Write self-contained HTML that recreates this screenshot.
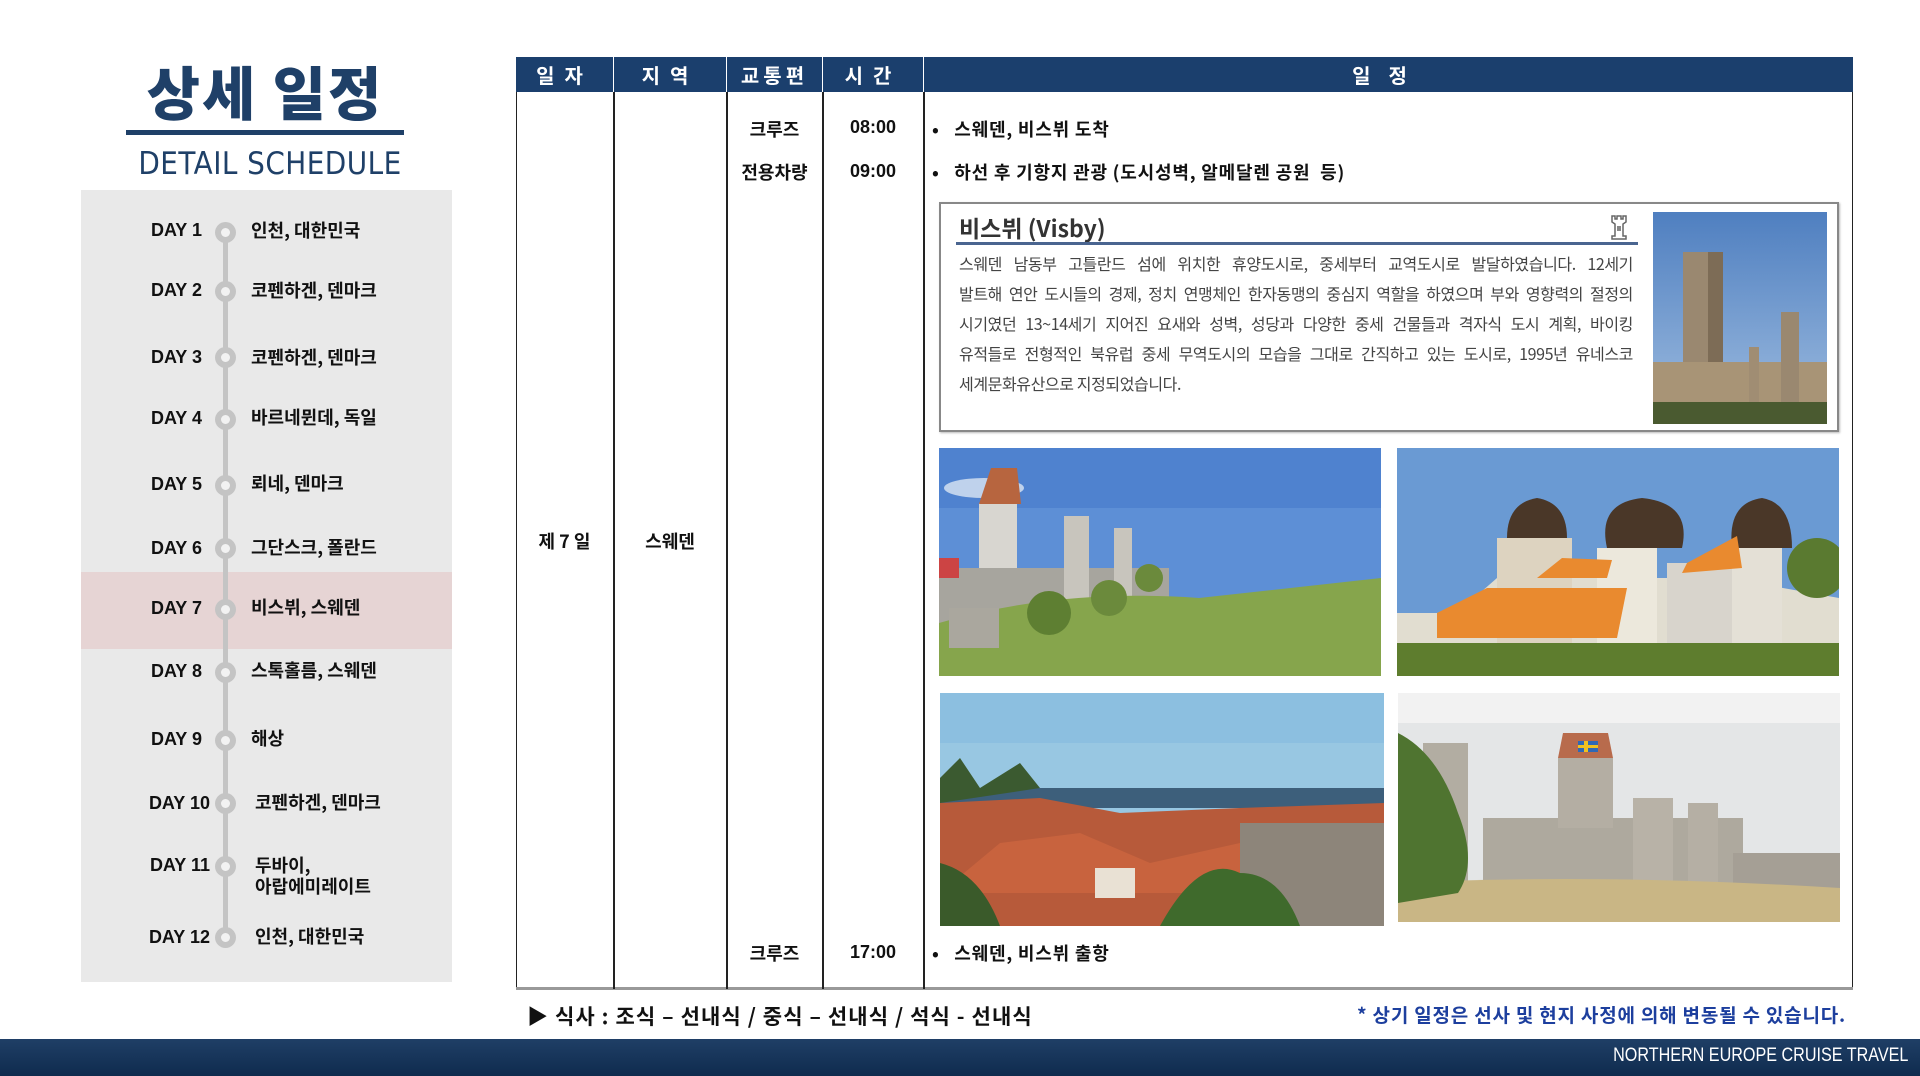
<!DOCTYPE html>
<html><head><meta charset="utf-8"><style>
*{margin:0;padding:0;box-sizing:border-box}
body{width:1920px;height:1076px;background:#fff;position:relative;overflow:hidden;font-family:"Liberation Sans","Noto Sans CJK KR",sans-serif}
.a{position:absolute}
.kr{font-family:"Noto Sans CJK KR",sans-serif}
.title{left:126px;width:278px;top:50px;text-align:center;font-size:58px;font-weight:900;color:#1f4068;letter-spacing:2px;line-height:80px}
.panel{left:81px;top:190px;width:371px;height:792px;background:#e9e9e9}
.hl{left:81px;top:572px;width:371px;height:77px;background:#e6d4d4}
.vline{left:223px;top:231px;width:5px;height:708px;background:#c4c4c4}
.day{font-weight:700;font-size:18px;color:#111;width:120px;text-align:right;left:82px}
.dot{left:215px;width:21px;height:21px;border-radius:50%;background:#c4c4c4}
.dot::after{content:"";position:absolute;left:6px;top:6px;width:9px;height:9px;border-radius:50%;background:#f2f2f2}
.place{left:251px;font-weight:700;font-size:18px;color:#111;line-height:21px}
.hd{top:57px;height:35px;background:#1b3f6d;color:#fff;font-weight:700;font-size:20px;text-align:center;line-height:35px;letter-spacing:10px}
.vl{top:92px;width:1.5px;height:897px;background:#222}
.c{font-weight:700;font-size:18px;color:#111;text-align:center}
.sch{font-weight:700;font-size:18px;color:#111;left:932px;letter-spacing:0.8px}
.ph{position:absolute}
.body p{white-space:nowrap;height:30px}
.body p.j{text-align:justify;text-align-last:justify;white-space:normal;overflow:hidden}
</style></head><body>
<div class="a title kr">상세 일정</div>
<div class="a" style="left:126px;top:130px;width:278px;height:5px;background:#1f4068"></div>
<div class="a" style="left:120px;top:146px;width:300px;text-align:center;font-size:31px;color:#1f4068;letter-spacing:0.5px;font-family:'DejaVu Sans',sans-serif;transform:scaleX(0.9)">DETAIL SCHEDULE</div>
<div class="a panel"></div>
<div class="a hl"></div>
<div class="a vline"></div>

<div class="a day" style="top:220px">DAY 1</div><div class="a dot" style="top:222px"></div><div class="a place kr" style="top:220px">인천, 대한민국</div>
<div class="a day" style="top:280px">DAY 2</div><div class="a dot" style="top:281px"></div><div class="a place kr" style="top:280px">코펜하겐, 덴마크</div>
<div class="a day" style="top:347px">DAY 3</div><div class="a dot" style="top:347px"></div><div class="a place kr" style="top:347px">코펜하겐, 덴마크</div>
<div class="a day" style="top:408px">DAY 4</div><div class="a dot" style="top:409px"></div><div class="a place kr" style="top:407px">바르네뮌데, 독일</div>
<div class="a day" style="top:474px">DAY 5</div><div class="a dot" style="top:475px"></div><div class="a place kr" style="top:473px">뢰네, 덴마크</div>
<div class="a day" style="top:538px">DAY 6</div><div class="a dot" style="top:538px"></div><div class="a place kr" style="top:537px">그단스크, 폴란드</div>
<div class="a day" style="top:598px">DAY 7</div><div class="a dot" style="top:599px"></div><div class="a place kr" style="top:597px">비스뷔, 스웨덴</div>
<div class="a day" style="top:661px">DAY 8</div><div class="a dot" style="top:662px"></div><div class="a place kr" style="top:660px">스톡홀름, 스웨덴</div>
<div class="a day" style="top:729px">DAY 9</div><div class="a dot" style="top:730px"></div><div class="a place kr" style="top:728px">해상</div>
<div class="a day" style="top:793px;left:90px">DAY 10</div><div class="a dot" style="top:793px"></div><div class="a place kr" style="top:792px;left:255px">코펜하겐, 덴마크</div>
<div class="a day" style="top:855px;left:90px">DAY 11</div><div class="a dot" style="top:856px"></div><div class="a place kr" style="top:855px;left:255px">두바이,<br>아랍에미레이트</div>
<div class="a day" style="top:927px;left:90px">DAY 12</div><div class="a dot" style="top:927px"></div><div class="a place kr" style="top:926px;left:255px">인천, 대한민국</div>

<!-- table -->
<div class="a" style="left:516px;top:57px;width:1337px;height:932px;border:1.5px solid #222;border-top:none"></div>
<div class="a" style="left:516px;top:987px;width:1337px;height:3px;background:#999"></div>
<div class="a hd kr" style="left:516px;width:97px">일자</div>
<div class="a hd kr" style="left:614px;width:112px">지역</div>
<div class="a hd kr" style="left:727px;width:95px;letter-spacing:4px">교통편</div>
<div class="a hd kr" style="left:823px;width:100px">시간</div>
<div class="a hd kr" style="left:924px;width:929px;letter-spacing:18px">일정</div>
<div class="a vl" style="left:613px"></div>
<div class="a vl" style="left:726px"></div>
<div class="a vl" style="left:822px"></div>
<div class="a vl" style="left:923px"></div>

<div class="a c kr" style="left:516px;width:97px;top:528px">제 7 일</div>
<div class="a c kr" style="left:614px;width:112px;top:528px">스웨덴</div>
<div class="a c kr" style="left:727px;width:95px;top:116px">크루즈</div>
<div class="a c" style="left:823px;width:100px;top:117px">08:00</div>
<div class="a c kr" style="left:727px;width:95px;top:159px">전용차량</div>
<div class="a c" style="left:823px;width:100px;top:161px">09:00</div>
<div class="a c kr" style="left:727px;width:95px;top:940px">크루즈</div>
<div class="a c" style="left:823px;width:100px;top:942px">17:00</div>
<div class="a sch kr" style="top:116px">•&nbsp;&nbsp; 스웨덴, 비스뷔 도착</div>
<div class="a sch kr" style="top:159px">•&nbsp;&nbsp; 하선 후 기항지 관광 (도시성벽, 알메달렌 공원&nbsp; 등)</div>
<div class="a sch kr" style="top:940px">•&nbsp;&nbsp; 스웨덴, 비스뷔 출항</div>

<!-- info box -->
<div class="a" style="left:939px;top:202px;width:900px;height:230px;border:2px solid #888;box-shadow:1px 1px 2px #bbb"></div>
<div class="a kr" style="left:959px;top:210px;font-size:23px;font-weight:700;color:#333">비스뷔 (Visby)</div>
<div class="a" style="left:956px;top:242px;width:682px;height:3px;background:#4a6590"></div>
<svg class="a" style="left:1608px;top:214px" width="22" height="26" viewBox="0 0 22 26"><path d="M4 2h3v3h2V2h4v3h2V2h3v6l-3 2v12h3v3H4v-3h3V10L4 8z" fill="none" stroke="#666" stroke-width="1.5"/><rect x="9" y="12" width="4" height="5" fill="#888"/></svg>
<div class="a kr body" style="left:959px;top:248px;width:674px;font-size:16px;line-height:30px;color:#444;letter-spacing:-0.4px">
<p class="j">스웨덴 남동부 고틀란드 섬에 위치한 휴양도시로, 중세부터 교역도시로 발달하였습니다. 12세기</p>
<p class="j">발트해 연안 도시들의 경제, 정치 연맹체인 한자동맹의 중심지 역할을 하였으며 부와 영향력의 절정의</p>
<p class="j">시기였던 13~14세기 지어진 요새와 성벽, 성당과 다양한 중세 건물들과 격자식 도시 계획, 바이킹</p>
<p class="j">유적들로 전형적인 북유럽 중세 무역도시의 모습을 그대로 간직하고 있는 도시로, 1995년 유네스코</p>
<p>세계문화유산으로 지정되었습니다.</p>
</div>
<svg class="a" style="left:1653px;top:212px" width="174" height="212" viewBox="0 0 174 212" preserveAspectRatio="none">
<defs><linearGradient id="s0" x1="0" y1="0" x2="0" y2="1"><stop offset="0" stop-color="#4f7fc0"/><stop offset="1" stop-color="#9fbde0"/></linearGradient></defs>
<rect width="174" height="212" fill="url(#s0)"/>
<rect x="30" y="40" width="40" height="172" fill="#9a8870"/><rect x="55" y="40" width="15" height="172" fill="#7d6c56"/>
<rect x="0" y="150" width="174" height="62" fill="#a89476"/>
<rect x="128" y="100" width="18" height="112" fill="#9a8870"/><rect x="96" y="135" width="10" height="77" fill="#a08d73"/>
<rect x="0" y="190" width="174" height="22" fill="#4a5a30"/>
</svg>

<!-- photos -->
<svg class="ph" style="left:939px;top:448px" width="442" height="228" viewBox="0 0 442 228" preserveAspectRatio="none">
<rect width="442" height="228" fill="#5d8fd6"/><rect y="0" width="442" height="60" fill="#4f82cf"/>
<ellipse cx="45" cy="40" rx="40" ry="10" fill="#dbe6f3" opacity=".8"/>
<rect x="40" y="55" width="38" height="115" fill="#d8d6d0"/><path d="M40 56 L52 20 L78 20 L82 56Z" fill="#b7653f"/>
<rect x="0" y="120" width="230" height="60" fill="#a7a59e"/><rect x="125" y="68" width="25" height="100" fill="#c8c5bd"/><rect x="175" y="80" width="18" height="80" fill="#c8c5bd"/>
<rect x="0" y="110" width="20" height="20" fill="#c44"/>
<path d="M0 175 Q120 140 260 150 L442 130 L442 228 L0 228Z" fill="#86a54c"/>
<rect x="10" y="160" width="50" height="40" fill="#aaa79e"/>
<circle cx="110" cy="165" r="22" fill="#5e7f32"/><circle cx="170" cy="150" r="18" fill="#6b8a3c"/><circle cx="210" cy="130" r="14" fill="#6b8a3c"/>
</svg>
<svg class="ph" style="left:1397px;top:448px" width="442" height="228" viewBox="0 0 442 228" preserveAspectRatio="none">
<rect width="442" height="228" fill="#6a9ad3"/>
<path d="M100 130 L60 165 L0 165 L0 228 L442 228 L442 150 L330 130Z" fill="#e1ddd0"/>
<rect x="100" y="90" width="75" height="130" fill="#ddd3c0"/><rect x="200" y="100" width="60" height="120" fill="#ece8dc"/><rect x="270" y="115" width="90" height="105" fill="#d8d4cc"/><rect x="335" y="100" width="50" height="110" fill="#e4e0d6"/>
<path d="M210 100 Q200 55 245 50 Q295 55 285 100Z" fill="#4a3728"/><path d="M110 90 Q110 55 140 50 Q170 55 170 90Z" fill="#4a3728"/><path d="M335 100 Q330 55 365 50 Q395 55 395 100Z" fill="#4a3728"/>
<path d="M40 165 L90 140 L230 140 L220 190 L40 190Z" fill="#e98a2f"/><path d="M140 130 L165 110 L215 112 L210 130Z" fill="#e98a2f"/><path d="M290 115 L340 88 L345 120 L285 125Z" fill="#e98a2f"/>
<rect x="0" y="195" width="442" height="33" fill="#5e7d2e"/><circle cx="420" cy="120" r="30" fill="#5a7a30"/>
</svg>
<svg class="ph" style="left:940px;top:693px" width="444" height="233" viewBox="0 0 444 233" preserveAspectRatio="none">
<rect width="444" height="233" fill="#98c7e2"/><rect y="0" width="444" height="50" fill="#8cbfe0"/>
<rect x="0" y="95" width="444" height="20" fill="#3d5f7b"/>
<path d="M0 85 L20 65 L40 95 L80 70 L100 95 L0 110Z" fill="#3b5a30"/>
<path d="M0 110 L100 105 L180 120 L300 115 L444 110 L444 233 L0 233Z" fill="#b75a3a"/>
<path d="M60 150 L140 140 L210 170 L300 150 L380 160 L444 150 L444 200 L0 200Z" fill="#c8633e"/>
<rect x="300" y="130" width="144" height="103" fill="#8d857a"/>
<path d="M0 170 Q40 180 60 233 L0 233Z" fill="#3a5a2a"/><path d="M220 233 Q260 160 300 180 Q340 180 360 233Z" fill="#3f6a2c"/>
<rect x="155" y="175" width="40" height="30" fill="#e9e1d4"/>
</svg>
<svg class="ph" style="left:1398px;top:693px" width="442" height="229" viewBox="0 0 442 229" preserveAspectRatio="none">
<rect width="442" height="229" fill="#e4e6e7"/><rect width="442" height="30" fill="#f2f2f2"/>
<rect x="85" y="125" width="260" height="70" fill="#aea99e"/><rect x="160" y="65" width="55" height="70" fill="#b4aea3"/><path d="M160 65 L165 40 L210 40 L215 65Z" fill="#b86b4c"/>
<rect x="180" y="48" width="20" height="11" fill="#2f69b6"/><rect x="186" y="48" width="4" height="11" fill="#f0c020"/><rect x="180" y="52" width="20" height="3" fill="#f0c020"/>
<rect x="25" y="50" width="45" height="140" fill="#b2ada2"/><rect x="235" y="105" width="40" height="90" fill="#b8b2a7"/><rect x="290" y="110" width="30" height="80" fill="#b5afa4"/>
<rect x="335" y="160" width="107" height="40" fill="#a59f95"/>
<path d="M0 190 Q200 180 442 195 L442 229 L0 229Z" fill="#c9b685"/>
<path d="M0 40 Q40 60 60 120 Q80 170 60 200 L0 210Z" fill="#4f7430"/>
</svg>

<div class="a kr" style="left:527px;top:1001px;font-size:21px;font-weight:700;color:#111;letter-spacing:1.1px">▶ 식사 : 조식 – 선내식 / 중식 – 선내식 / 석식 - 선내식</div>
<div class="a kr" style="right:74px;top:1001px;font-size:19px;font-weight:700;color:#1d3f9e;letter-spacing:0.8px">* 상기 일정은 선사 및 현지 사정에 의해 변동될 수 있습니다.</div>
<div class="a" style="left:0;top:1039px;width:1920px;height:37px;background:linear-gradient(#1f3f66,#0f2b4e)"></div>
<div class="a" style="right:12px;top:1045px;color:#fff;font-size:19px;transform:scaleX(0.85);transform-origin:right;letter-spacing:0">NORTHERN EUROPE CRUISE TRAVEL</div>
</body></html>
